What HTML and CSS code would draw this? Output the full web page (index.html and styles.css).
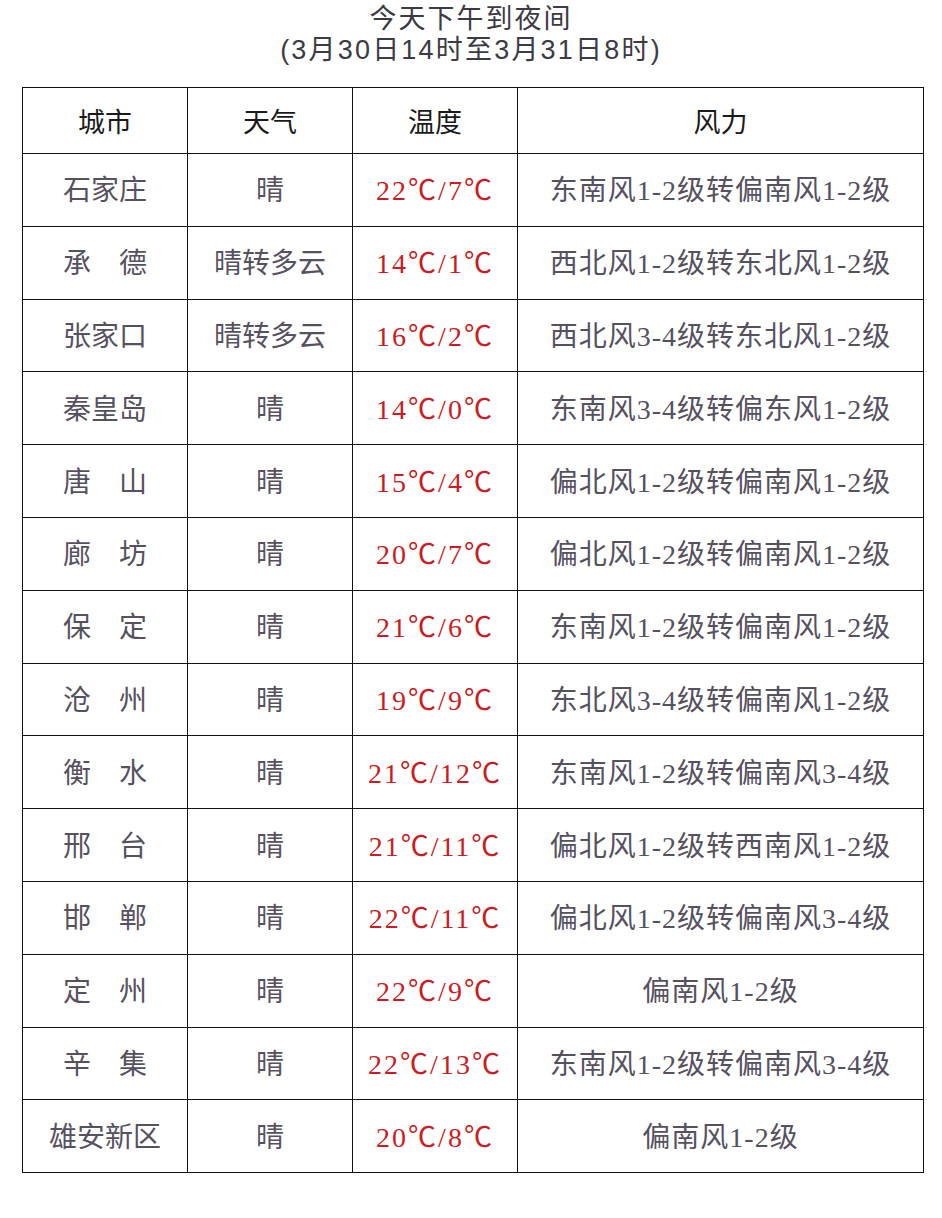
FILE: index.html
```html
<!DOCTYPE html>
<html lang="zh">
<head>
<meta charset="utf-8">
<link rel="stylesheet" href="styles.css">
</head>
<body>
<div class="page">
  <div class="title">
    <div class="t1">今天下午到夜间</div>
    <div class="t2">(3月30日14时至3月31日8时)</div>
  </div>
  <table class="wx">
    <colgroup>
      <col class="c1"><col class="c2"><col class="c3"><col class="c4">
    </colgroup>
    <thead>
      <tr><th>城市</th><th>天气</th><th>温度</th><th>风力</th></tr>
    </thead>
    <tbody>
      <tr><td>石家庄</td><td>晴</td><td class="temp">22℃/7℃</td><td class="wind">东南风1-2级转偏南风1-2级</td></tr>
      <tr><td>承　德</td><td>晴转多云</td><td class="temp">14℃/1℃</td><td class="wind">西北风1-2级转东北风1-2级</td></tr>
      <tr><td>张家口</td><td>晴转多云</td><td class="temp">16℃/2℃</td><td class="wind">西北风3-4级转东北风1-2级</td></tr>
      <tr><td>秦皇岛</td><td>晴</td><td class="temp">14℃/0℃</td><td class="wind">东南风3-4级转偏东风1-2级</td></tr>
      <tr><td>唐　山</td><td>晴</td><td class="temp">15℃/4℃</td><td class="wind">偏北风1-2级转偏南风1-2级</td></tr>
      <tr><td>廊　坊</td><td>晴</td><td class="temp">20℃/7℃</td><td class="wind">偏北风1-2级转偏南风1-2级</td></tr>
      <tr><td>保　定</td><td>晴</td><td class="temp">21℃/6℃</td><td class="wind">东南风1-2级转偏南风1-2级</td></tr>
      <tr><td>沧　州</td><td>晴</td><td class="temp">19℃/9℃</td><td class="wind">东北风3-4级转偏南风1-2级</td></tr>
      <tr><td>衡　水</td><td>晴</td><td class="temp">21℃/12℃</td><td class="wind">东南风1-2级转偏南风3-4级</td></tr>
      <tr><td>邢　台</td><td>晴</td><td class="temp">21℃/11℃</td><td class="wind">偏北风1-2级转西南风1-2级</td></tr>
      <tr><td>邯　郸</td><td>晴</td><td class="temp">22℃/11℃</td><td class="wind">偏北风1-2级转偏南风3-4级</td></tr>
      <tr><td>定　州</td><td>晴</td><td class="temp">22℃/9℃</td><td class="wind">偏南风1-2级</td></tr>
      <tr><td>辛　集</td><td>晴</td><td class="temp">22℃/13℃</td><td class="wind">东南风1-2级转偏南风3-4级</td></tr>
      <tr><td>雄安新区</td><td>晴</td><td class="temp">20℃/8℃</td><td class="wind">偏南风1-2级</td></tr>
    </tbody>
  </table>
</div>
</body>
</html>
```

FILE: styles.css
```css
html, body {
  margin: 0;
  padding: 0;
  background: #ffffff;
}
.page {
  width: 942px;
  padding-top: 4px;
}
.title {
  text-align: center;
  color: #3c3a44;
  font-family: "Liberation Sans", "Noto Sans CJK SC", sans-serif;
  font-size: 27px;
  line-height: 31px;
  height: 83px;
}
.t1 { letter-spacing: 2px; }
.t2 { letter-spacing: 2.2px; }
.wx {
  margin-left: 22px;
  width: 901px;
  border-collapse: collapse;
  table-layout: fixed;
  font-family: "Liberation Serif", "Noto Sans CJK SC", serif;
  font-size: 28px;
  color: #56515f;
}
.c1, .c2, .c3 { width: 165px; }
.c4 { width: 406px; }
.wx th, .wx td {
  border: 1.5px solid #111111;
  text-align: center;
  padding: 0;
}
.wx th {
  height: 65px;
  font-weight: normal;
  font-size: 27px;
  color: #1a1a1a;
  font-family: "Noto Sans CJK SC", sans-serif;
}
.wx td {
  height: 72.8px;
  padding-bottom: 3px;
  box-sizing: border-box;
  white-space: nowrap;
}
.wx td.temp {
  color: #cc1b22;
  letter-spacing: 2px;
}
.wx td.wind {
  letter-spacing: 1px;
}
```
